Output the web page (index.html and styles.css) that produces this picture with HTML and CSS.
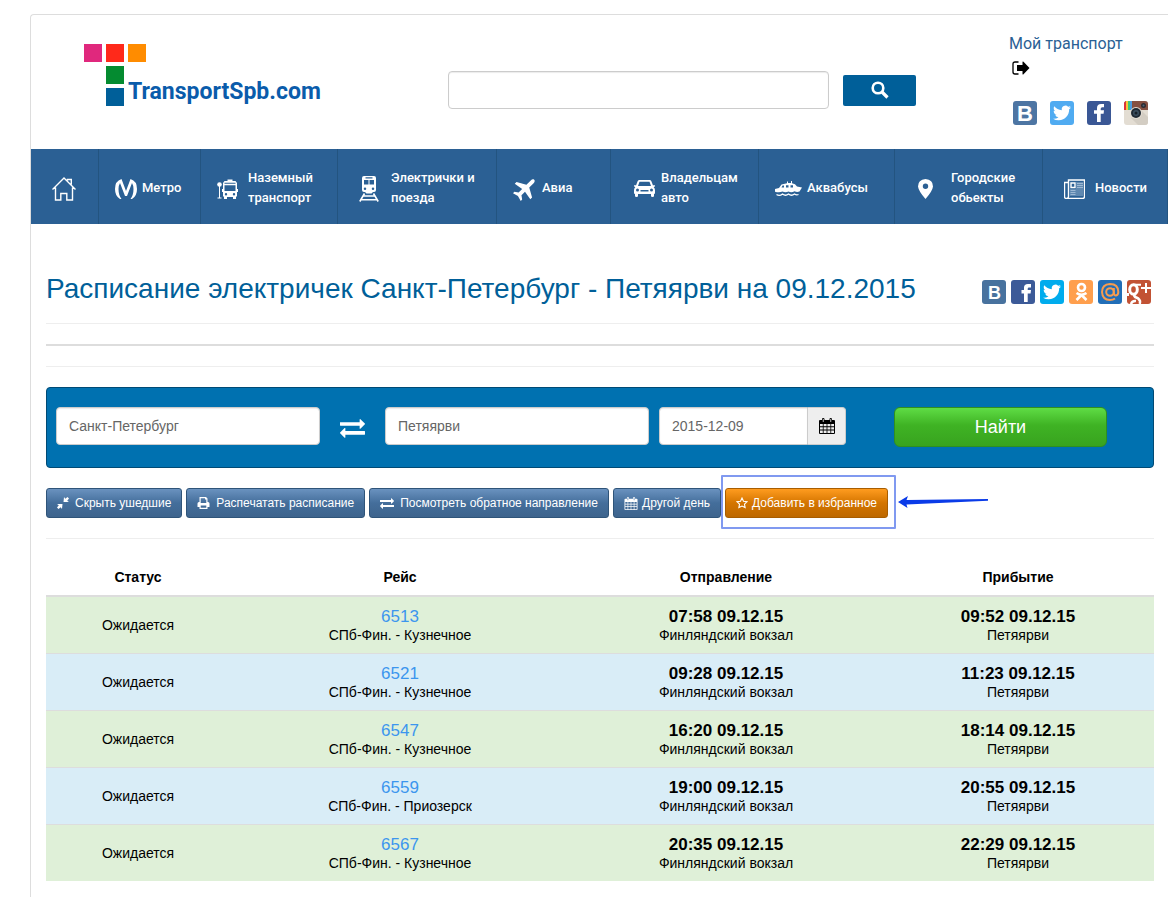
FILE: index.html
```html
<!DOCTYPE html>
<html lang="ru">
<head>
<meta charset="utf-8">
<title>Расписание электричек Санкт-Петербург - Петяярви</title>
<link rel="stylesheet" href="styles.css">
</head>
<body>
<svg class="sprite" aria-hidden="true">
  <symbol id="exchange" viewBox="0 0 1792 1792"><path d="M1792 1184v192q0 13-9.500 22.500t-22.500 9.500h-1376v192q0 13-9.500 22.500t-22.500 9.500q-12 0-24-10l-319-320q-9-9-9-22 0-14 9-23l320-320q9-9 23-9 13 0 22.500 9.500t9.500 22.500v192h1376q13 0 22.500 9.500t9.500 22.500zm0-544q0 14-9 23l-320 320q-9 9-23 9-13 0-22.500-9.500t-9.500-22.500v-192h-1376q-13 0-22.500-9.500t-9.500-22.500v-192q0-13 9.500-22.500t22.500-9.500h1376v-192q0-14 9-23t23-9q12 0 24 10l319 319q9 9 9 23z"/></symbol>
  <symbol id="bird" viewBox="0 0 24 24"><path d="M23.953 4.570a10 10 0 01-2.825.775 4.958 4.958 0 002.163-2.723c-.951.555-2.005.959-3.127 1.184a4.920 4.920 0 00-8.384 4.482C7.690 8.095 4.067 6.130 1.640 3.162a4.822 4.822 0 00-.666 2.475c0 1.710.870 3.213 2.188 4.096a4.904 4.904 0 01-2.228-.616v.060a4.923 4.923 0 003.946 4.827 4.996 4.996 0 01-2.212.085 4.936 4.936 0 004.604 3.417 9.867 9.867 0 01-6.102 2.105c-.390 0-.779-.023-1.170-.067a13.995 13.995 0 007.557 2.209c9.053 0 13.998-7.496 13.998-13.985 0-.210 0-.420-.015-.630A9.935 9.935 0 0024 4.590z"/></symbol>
  <symbol id="calendar" viewBox="0 0 16 16"><path fill-rule="evenodd" d="M1 2h2V1q0-1 1.200-1T5.500 1v1h5V1q0-1 1.200-1T13 1v1h2q1 0 1 1v12q0 1-1 1H1q-1 0-1-1V3q0-1 1-1zM1 6v2.300h2.800V6zm3.600 0v2.300h3V6zm3.800 0v2.300h3V6zm3.800 0v2.300H15V6zM1 9.200v2.300h2.800V9.200zm3.600 0v2.300h3V9.200zm3.800 0v2.300h3V9.200zm3.800 0v2.300H15V9.200zM1 12.400V15h2.800v-2.600zm3.600 0V15h3v-2.600zm3.800 0V15h3v-2.600zm3.800 0V15H15v-2.600zM3.800 1v3h.800V1zm7.600 0v3h.800V1z"/></symbol>
</svg>

<div class="page">
  <header class="header">
    <a class="logo" href="#" aria-label="TransportSpb.com">
      <span class="tile pink"></span><span class="tile red"></span><span class="tile orange"></span>
      <span class="tile green"></span>
      <span class="tile blue"></span><span class="logo-name">TransportSpb.com</span>
    </a>
    <form class="site-search">
      <input type="text" aria-label="Поиск по сайту">
      <button type="button" aria-label="Искать">
        <svg width="18" height="18" viewBox="0 0 18 18" fill="none" stroke="#fff"><circle cx="7" cy="7" r="5.300" stroke-width="2.600"/><path d="M11 11l5.500 5.500" stroke-width="3.200"/></svg>
      </button>
    </form>
    <div class="account">
      <a class="account-link" href="#">Мой транспорт</a>
      <a class="exit" href="#" aria-label="Выход">
        <svg width="18" height="14" viewBox="0 0 18 14"><path d="M6.500 1H3Q1 1 1 3v8q0 2 2 2h3.500" fill="none" stroke="#000" stroke-width="1.300"/><path d="M5 4h5.500V.8q.5-.6 1 0L17.500 7l-6 6.200q-.5.600-1 0V10H5z"/></svg>
      </a>
      <div class="networks">
        <a href="#" aria-label="ВКонтакте"><svg viewBox="0 0 24 24"><rect width="24" height="24" rx="3" fill="#4d75a3"/><text class="mark" x="4" y="20" font-size="22">B</text></svg></a>
        <a href="#" aria-label="Twitter"><svg viewBox="0 0 24 24"><rect width="24" height="24" rx="3" fill="#50abf1"/><use href="#bird" x="3" y="3" width="18" height="18" fill="#fff"/></svg></a>
        <a href="#" aria-label="Facebook"><svg viewBox="0 0 24 24"><rect width="24" height="24" rx="3" fill="#3a5795"/><path fill="#fff" d="M10 21v-8.300H7V9.200h3V7q0-4 4.200-4H17v3.300h-1.800q-1.500 0-1.500 1.500v1.400H17l-.4 3.500h-2.900V21z"/></svg></a>
        <a href="#" aria-label="Instagram"><svg viewBox="0 0 24 24"><rect width="24" height="24" rx="3" fill="#e3ddd3"/><path fill="#d3cdc3" d="M7 17l9-9 8 8v5q0 3-3 3h-7z"/><path fill="#855042" d="M3 0h18q3 0 3 3v6H0V3q0-3 3-3z"/><path fill="#dd3238" d="M0 9V3q0-2 2-3v9z"/><path fill="#f5c739" d="M2 0h2v9H2z"/><path fill="#3cc47c" d="M4 0h2v9H4z"/><path fill="#4a9be0" d="M6 0h2v9H6z"/><circle cx="12" cy="12" r="6" fill="#e3ddd3"/><circle cx="12" cy="12" r="5" fill="#202a34"/><circle cx="12" cy="12" r="3" fill="#3b4e5e"/><circle cx="12" cy="12" r="1.500" fill="#172029"/><circle cx="19.500" cy="4.500" r="2.500" fill="#2d2b31"/><circle cx="19.500" cy="4.500" r="1" fill="#51677a"/></svg></a>
      </div>
    </div>
  </header>

  <nav class="nav">
    <a class="wide" href="#" aria-label="Главная"><svg width="24" height="24" viewBox="0 0 24 24" fill="none" stroke="#fff" stroke-width="1.400"><path d="M.5 12.500L12 1l11.500 11.500M3.500 10.500V23h5.300v-6.500h6V23h5.700V10.500M15.500 3.500v-1h3.800v5"/></svg></a>
    <a href="#"><svg width="22" height="20" viewBox="0 0 22 20" fill="#fff"><path d="M6.500 0Q0 2 0 10q0 7 5 10h1.500Q3.500 16 3.500 10q0-3.500 1.500-6l5 13h2l5-13q1.500 2.500 1.500 6 0 6-3 10H17q5-3 5-10 0-8-6.500-10L11 12z"/></svg><span>Метро</span></a>
    <a class="spaced" href="#"><svg width="21" height="20" viewBox="0 0 21 20" fill="#fff"><circle cx="2.500" cy="5.500" r="2.300"/><path d="M2 7h1v11.500h1.500v1H.500v-1H2z"/><path fill-rule="evenodd" d="M7.500 2h3V.5h5V2h3L20 4v6h1v3h-1v4.500h-1V20H16v-2h-6v2H7v-2.500H6V13H5v-3h1V4zM7.500 3.700v1h11v-1zm0 2.500V12h11V6.200zM9 14a1.200 1.200 0 100 2.400A1.200 1.200 0 009 14zm8 0a1.200 1.200 0 100 2.400 1.200 1.200 0 000-2.400z"/></svg><span>Наземный транспорт</span></a>
    <a class="wide train" href="#"><svg width="20" height="26" viewBox="0 0 20 26" fill="#fff"><path fill-rule="evenodd" d="M5 0h10q2 0 2 2v12q0 2-2 2h-1l-1.500 1.500h-5L6 16H5q-2 0-2-2V2q0-2 2-2zm1.500 1.200v1.300h7V1.200zM5 4v4.500h4.500V4zm5.500 0v4.500H15V4zM6 11.500A1.200 1.200 0 106 14a1.200 1.200 0 000-2.500zm8 0a1.200 1.200 0 100 2.500 1.200 1.200 0 000-2.500z"/><path fill="none" stroke="#fff" stroke-width="1.600" d="M5.500 17.500L.800 25.500M14.500 17.500l4.700 8M4.500 20h11M2.500 23.700h15"/></svg><span>Электрички и поезда</span></a>
    <a href="#"><svg width="24" height="24" viewBox="0 0 24 24" fill="#fff"><path transform="rotate(45 12 12)" d="M23 15.500V13l-9-5V1.500C14 .3 13.200-1 12-1s-2 1.300-2 2.500V8l-9 5v2.500l9-1.500v5l-3.500 2.500v2L12 22l5.500 1.500v-2L14 19v-5z"/></svg><span>Авиа</span></a>
    <a class="wider" href="#"><svg width="21" height="17" viewBox="0 0 21 17" fill="#fff"><path fill-rule="evenodd" d="M5 0h11q1 0 1.500 1.500L19 5.500l1-.5q1 0 1 1.200l-1.300 1q1.300 1 1.300 3v3.500h-1V16q0 1-1.500 1T17 16v-2H4v2q0 1-1.500 1T1 16v-2.300H0v-3.500q0-2 1.300-3L0 6.200Q0 5 1 5l1 .5 1.500-4Q4 0 5 0zm.5 1.800L4 6h13l-1.500-4.200zM3.500 8.500a1.500 1.500 0 100 3 1.500 1.500 0 000-3zm14 0a1.500 1.500 0 100 3 1.500 1.500 0 000-3zM6.500 10v1.500h8V10z"/></svg><span>Владельцам авто</span></a>
    <a href="#"><svg width="27" height="16" viewBox="0 0 27 16" fill="#fff"><path fill-rule="evenodd" d="M0 8l4-1 2.500-3.500L12 2.200V.5h1V2h3V0h1v2.200q3.500.5 5 3.300l5 1-2.500 4q-2.500 1-5-.3-3 1.800-6 .3-3 1.500-6 0-3 1.500-7.500.3zm7.500-3.500L6.500 6.500H9v-2zm3.500-.3v2.300h2.500V4.200zm4.500 0v2.300H18V4.200z"/><path fill="none" stroke="#fff" stroke-width="1.300" d="M1.500 13.500q3 2 6-.5 3 2.500 6 0 3 2.500 6 0 2 1.500 4 .5"/></svg><span>Аквабусы</span></a>
    <a class="wider distant" href="#"><svg width="15" height="20" viewBox="0 0 15 20" fill="#fff"><path fill-rule="evenodd" d="M7.500 0Q15 .5 15 7.500 14.500 12 7.500 20 .5 12 0 7.500 0 .5 7.500 0zm0 4.500a2.700 2.700 0 100 5.400 2.700 2.700 0 000-5.400z"/></svg><span>Городские обьекты</span></a>
    <a class="wide spaced" href="#"><svg width="21" height="20" viewBox="0 0 21 20" fill="none" stroke="#fff" stroke-width="1.400"><path fill="#5f88b0" stroke="none" d="M12 3h7v14H6v-7h6z"/><path d="M4.500 3V1h16v16.500q0 2-2 2h-16q-2 0-2-2v-14h4v14q0 1.500-1.500 2"/><path d="M7 4h4v4.500H7z"/><path stroke="#9db8d3" stroke-width="1" d="M13 4.500h6M13 6.500h6M13 8.500h6M6.500 11.500h5M6.500 13.500h5M6.500 15.500h5"/></svg><span>Новости</span></a>
  </nav>

  <main class="content">
    <div class="title-row">
      <h1>Расписание электричек Санкт-Петербург - Петяярви на 09.12.2015</h1>
      <div class="share">
        <a href="#" aria-label="ВКонтакте"><svg viewBox="0 0 24 24"><rect width="24" height="24" rx="3" fill="#48729e"/><text class="mark" x="6" y="19" font-size="18">B</text></svg></a>
        <a href="#" aria-label="Facebook"><svg viewBox="0 0 24 24"><rect width="24" height="24" rx="3" fill="#3c5a98"/><path fill="#fff" d="M13 22v-8.500h-2.500V10H13V7.500Q13 4 17 4h3v3.500h-2q-1.300 0-1.300 1.300V10H20l-.4 3.500h-2.900V22z"/></svg></a>
        <a href="#" aria-label="Twitter"><svg viewBox="0 0 24 24"><rect width="24" height="24" rx="3" fill="#00aced"/><use href="#bird" x="3" y="3" width="18" height="18" fill="#fff"/></svg></a>
        <a href="#" aria-label="Одноклассники"><svg viewBox="0 0 24 24"><rect width="24" height="24" rx="3" fill="#ff9f4d"/><g fill="none" stroke="#fff" stroke-width="2.600"><circle cx="12.500" cy="7.500" r="3.500"/><path d="M7.500 13q5 3.500 10 0M12.500 15l-5 5M12.500 15l5 5"/></g></svg></a>
        <a href="#" aria-label="Мой Мир"><svg viewBox="0 0 24 24"><rect width="24" height="24" rx="3" fill="#226eb7"/><g fill="none" stroke="#f89c4e" stroke-width="2"><circle cx="12" cy="12" r="3.800"/><path d="M15.800 8v5q.2 2.500 2.200 2.500 2.300-.5 2.300-3.500 0-8-8.300-8-8 .5-8 8 .5 8 8 8 3 0 5-1.500"/></g></svg></a>
        <a href="#" aria-label="Google+"><svg viewBox="0 0 24 24"><rect width="24" height="24" rx="3" fill="#c25234"/><g fill="none" stroke="#fff"><ellipse cx="6.500" cy="9.500" rx="3.800" ry="4.800" stroke-width="3"/><path stroke-width="2" d="M6 4.700h8M1 13v3"/><path stroke-width="2.500" d="M9 14q-3 1.500-1 3 4 1 5 4 .2 2-.5 3M4 24q1-3.500 5-3"/><path stroke-width="2" d="M14 8h10M19 3v10"/></g></svg></a>
      </div>
    </div>
    <hr class="thin"><hr class="thick"><hr class="thin">

    <form class="route">
      <input class="station" type="text" value="Санкт-Петербург" aria-label="Откуда">
      <button class="swap" type="button" aria-label="Поменять местами"><svg width="25" height="25"><use href="#exchange"/></svg></button>
      <input class="station" type="text" value="Петяярви" aria-label="Куда">
      <div class="date">
        <input type="text" value="2015-12-09" aria-label="Дата">
        <button type="button" aria-label="Календарь"><svg width="16" height="16"><use href="#calendar"/></svg></button>
      </div>
      <button class="find" type="button">Найти</button>
    </form>

    <div class="actions">
      <button type="button"><svg width="12" height="12" viewBox="0 0 12 12" fill="#fff"><path d="M7 0l1.300 1.800L10.500 0 12 1.500l-1.800 2.200L12 5H6.500zM0 7h5.500L5 12l-1.300-1.800L1.500 12 0 10.500l1.800-2.200z"/></svg>Скрыть ушедшие</button>
      <button type="button"><svg width="13" height="12" viewBox="0 0 12 12"><path fill="#fff" fill-rule="evenodd" d="M2 0h6.500L10 1.500V5h.5Q12 5 12 6.500V10h-2v2H2v-2H0V6.500Q0 5 1.500 5H2zm1.200 1.200V6h5.600V2.500H7.500V1.200zm0 7.300v2.300h5.600V8.500z"/></svg>Распечатать расписание</button>
      <button type="button"><svg width="14" height="14"><use href="#exchange"/></svg>Посмотреть обратное направление</button>
      <button class="tight" type="button"><svg width="14" height="13"><use href="#calendar"/></svg>Другой день</button>
      <div class="favorite">
        <button class="tight orange-button" type="button"><svg width="12" height="12" viewBox="0 0 12 12" fill="none" stroke="#fff" stroke-width="1.100"><path d="M6 1l1.500 3.200 3.500.5-2.500 2.400.6 3.500L6 9l-3.100 1.600.6-3.500L1 4.700l3.500-.5z"/></svg>Добавить в избранное</button>
        <svg class="pointer" width="91" height="14" viewBox="0 0 91 14" fill="#0a3be8"><path d="M0 7L10 1 8.500 5 90 4v1.800L8.500 9.500 9.500 13z"/></svg>
      </div>
    </div>
    <hr class="thin">

    <table class="timetable">
      <thead><tr><th class="c-status">Статус</th><th class="c-trip">Рейс</th><th class="c-from">Отправление</th><th class="c-to">Прибытие</th></tr></thead>
      <tbody>
        <tr><td>Ожидается</td><td><a href="#">6513</a><p>СПб-Фин. - Кузнечное</p></td><td><b>07:58 09.12.15</b><p>Финляндский вокзал</p></td><td><b>09:52 09.12.15</b><p>Петяярви</p></td></tr>
        <tr><td>Ожидается</td><td><a href="#">6521</a><p>СПб-Фин. - Кузнечное</p></td><td><b>09:28 09.12.15</b><p>Финляндский вокзал</p></td><td><b>11:23 09.12.15</b><p>Петяярви</p></td></tr>
        <tr><td>Ожидается</td><td><a href="#">6547</a><p>СПб-Фин. - Кузнечное</p></td><td><b>16:20 09.12.15</b><p>Финляндский вокзал</p></td><td><b>18:14 09.12.15</b><p>Петяярви</p></td></tr>
        <tr><td>Ожидается</td><td><a href="#">6559</a><p>СПб-Фин. - Приозерск</p></td><td><b>19:00 09.12.15</b><p>Финляндский вокзал</p></td><td><b>20:55 09.12.15</b><p>Петяярви</p></td></tr>
        <tr><td>Ожидается</td><td><a href="#">6567</a><p>СПб-Фин. - Кузнечное</p></td><td><b>20:35 09.12.15</b><p>Финляндский вокзал</p></td><td><b>22:29 09.12.15</b><p>Петяярви</p></td></tr>
      </tbody>
    </table>
  </main>
</div>
</body>
</html>
```
FILE: styles.css
```css
* { box-sizing: border-box; }
body {
  margin: 0;
  min-height: 100vh;
  padding: 14px 0 0 30px;
  display: flex;
  flex-direction: column;
  background: #fff;
  color: #000;
  font: 14px/20px "Liberation Sans", Arial, sans-serif;
}
a { text-decoration: none; }
button, input { font: inherit; margin: 0; }
button { cursor: pointer; }
svg { display: block; flex: none; }
.sprite { position: absolute; width: 0; height: 0; }
.mark { font-family: "Liberation Sans", Arial, sans-serif; font-weight: bold; fill: #fff; }

.page {
  flex: 1;
  border: 1px solid #ddd;
  border-width: 1px 0 0 1px;
  border-radius: 4px 0 0 0;
}

.header {
  display: grid;
  grid-template-columns: 417fr 561fr 159fr;
  height: 134px;
}
.logo {
  display: grid;
  grid-template-columns: 22px 22px auto;
  grid-template-rows: 22px 22px 22px;
  align-content: start;
  padding: 29px 0 0 53px;
}
.tile { width: 18px; height: 18px; }
.pink { background: #e0287d; }
.red { background: #ff291a; }
.orange { background: #ff8c00; }
.green { grid-column: 2; background: #048b30; }
.blue { grid-column: 2; background: #005f99; }
.logo-name {
  color: #0a5cab;
  font: bold 23px/8px Roboto, sans-serif;
}
.site-search {
  display: flex;
  align-items: center;
  align-self: start;
  gap: 14px;
  margin-top: 56px;
}
.site-search input {
  width: 68%;
  height: 38px;
  border: 1px solid #ccc;
  border-radius: 4px;
  box-shadow: inset 0 1px 1px rgba(0, 0, 0, .08);
}
.site-search button {
  display: grid;
  place-items: center;
  width: 13%;
  height: 31px;
  border: 0;
  border-radius: 2px;
  background: #005f99;
}
.account { padding-top: 19px; }
.account-link {
  display: block;
  color: #2a6094;
  font: 16px/20px Roboto, sans-serif;
}
.exit { display: block; padding: 7px 0 0 3px; }
.networks { display: flex; gap: 13px; padding: 26px 0 0 4px; }
.networks svg, .share svg { width: 24px; height: 24px; }

.nav {
  display: grid;
  grid-template-columns: 68fr 102fr 137fr 159fr 114fr 148fr 136fr 148fr 125fr;
  min-height: 75px;
  background: #2b6094;
}
.nav a {
  display: flex;
  align-items: center;
  gap: 5px;
  padding: 4px 8px 0 16px;
  border-right: 1px solid #235480;
  color: #fff;
  font: 500 13px/20px Roboto, sans-serif;
}
.nav a.wide { padding-left: 21px; }
.nav a.wider { padding-left: 23px; gap: 6px; }
.nav a.spaced { gap: 10px; }
.nav a.train { gap: 12px; }
.nav a.distant { gap: 18px; }
.nav span { padding-bottom: 2px; }

.content { padding: 0 14px 0 15px; }
.title-row {
  display: flex;
  justify-content: space-between;
  align-items: center;
  padding: 46px 3px 15px 0;
}
h1 {
  margin: 0;
  color: #005f99;
  font-size: 28px;
  font-weight: normal;
  line-height: 38px;
  white-space: nowrap;
}
.share { display: flex; gap: 5px; padding-top: 5px; }
hr { margin: 0 0 20px; border: 0; }
.thin { border-top: 1px solid #eee; }
.thick { border-top: 2px solid #ddd; }

.route {
  display: flex;
  align-items: flex-start;
  height: 81px;
  padding: 19px 9px;
  border: 1px solid #004a75;
  border-radius: 4px;
  background: #0071b0;
}
.route input {
  height: 38px;
  padding: 0 12px;
  border: 1px solid #ccc;
  border-radius: 4px;
  background: #fff;
  box-shadow: inset 0 1px 1px rgba(0, 0, 0, .08);
  color: #666;
}
.route .station { flex: 1 1 264px; min-width: 0; }
.swap {
  width: 65px;
  height: 40px;
  display: grid;
  place-items: center;
  padding: 0;
  border: 0;
  background: none;
  fill: #fff;
}
.date { display: flex; flex: 1 1 187px; min-width: 0; margin-left: 10px; }
.date input { flex: 1; min-width: 0; border-radius: 4px 0 0 4px; }
.date button {
  display: grid;
  place-items: center;
  width: 38px;
  padding: 0;
  border: 1px solid #ccc;
  border-left: 0;
  border-radius: 0 4px 4px 0;
  background: #eee;
}
.find {
  flex: 1 1 213px;
  height: 40px;
  margin: 0 37px 0 48px;
  border: 1px solid #2f8f20;
  border-radius: 6px;
  background: linear-gradient(#5fdc45, #3fb324 45%, #38a31f);
  color: #fff;
  font-size: 18px;
}

.actions { display: flex; gap: 4px; margin: 20px 0; }
.actions button {
  display: flex;
  align-items: center;
  gap: 6px;
  height: 30px;
  padding: 0 10px;
  border: 1px solid #2f5479;
  border-radius: 3px;
  background: linear-gradient(#6a92bf, #446e9b 50%, #3e648d);
  color: #fff;
  fill: #fff;
  font-size: 12px;
  white-space: nowrap;
}
.actions .tight { gap: 4px; }
.actions .orange-button {
  border-color: #a85d00;
  background: linear-gradient(#ff9c1f, #d47500 50%, #bd6800);
}
.favorite { position: relative; }
.favorite::before {
  content: "";
  position: absolute;
  inset: -13px -8px -11px -4px;
  border: 2px solid #8099f0;
  border-radius: 1px;
  pointer-events: none;
}
.pointer { position: absolute; left: calc(100% + 10px); top: 7px; }

.timetable {
  width: 100%;
  table-layout: fixed;
  border-collapse: collapse;
  text-align: center;
}
.c-status { width: 184px; }
.c-trip { width: 340px; }
.c-from { width: 312px; }
.c-to { width: 272px; }
th { height: 37px; padding: 0; border-bottom: 2px solid #ddd; }
td { height: 57px; padding: 2px 0 0; border-top: 1px solid #ddd; line-height: 19px; }
tbody tr:nth-child(odd) { background: #dff0d8; }
tbody tr:nth-child(even) { background: #d9edf7; }
td a { color: #3c96ee; }
td a, td b { display: block; font-size: 17px; }
td p { margin: 0; }
```
